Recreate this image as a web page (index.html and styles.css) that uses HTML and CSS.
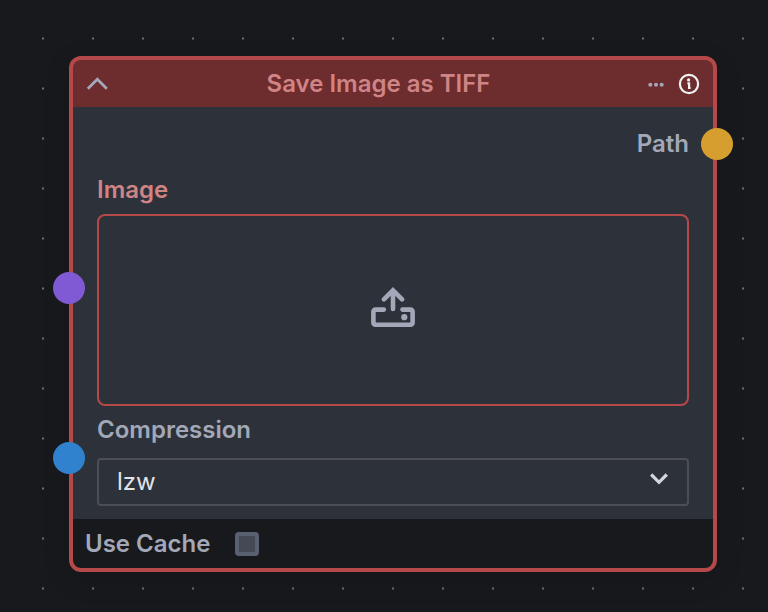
FILE: index.html
```html
<!DOCTYPE html>
<html lang="en">
<head>
<meta charset="utf-8">
<title>Save Image as TIFF</title>
<link rel="stylesheet" href="styles.css">
</head>
<body>
<main class="canvas">
  <article class="node">
    <header class="node-header">
      <svg class="collapse" viewBox="0 0 24 24" width="24" height="24"><path d="M2.8 16.7 12.3 7.2 21.8 16.7"/></svg>
      <h1 class="title">Save Image as TIFF</h1>
      <svg class="more" viewBox="0 0 16 16" width="16" height="16"><circle cx="2.3" cy="8.7" r="2"/><circle cx="8" cy="8.7" r="2"/><circle cx="13.7" cy="8.7" r="2"/></svg>
      <svg class="info" viewBox="0 0 24 24" width="24" height="24"><circle class="ring" cx="12" cy="12" r="9.1"/><circle class="point" cx="11.6" cy="7.9" r="1.6"/><path d="M10.4 11.3h1.7v4.7h1.5"/></svg>
    </header>
    <section class="node-body">
      <div class="output">Path<span class="handle handle-right"></span></div>
      <div class="label label-error">Image</div>
      <div class="dropzone">
        <svg viewBox="0 0 48 48" width="48" height="48"><path d="M24 25V6.5M14.9 15.4 24 6.3 33.1 15.4M14.9 25.6H6.4a2 2 0 0 0-2 2V38.8a2 2 0 0 0 2 2H41.6a2 2 0 0 0 2-2V27.6a2 2 0 0 0-2-2H33.5"/><circle cx="35.3" cy="33.2" r="3.1"/></svg>
        <span class="handle handle-image"></span>
      </div>
      <div class="label">Compression</div>
      <div class="select">
        <span>lzw</span>
        <svg viewBox="0 0 24 24" width="24" height="24"><path d="M4.2 4.5 12 12.3 19.8 4.5"/></svg>
        <span class="handle handle-compression"></span>
      </div>
    </section>
    <footer class="node-footer"><span>Use Cache</span><span class="checkbox"></span></footer>
  </article>
</main>
</body>
</html>
```
FILE: styles.css
```css
* {
  box-sizing: border-box;
}

body {
  margin: 0;
  background: #18191d;
  color: #a3a8b8;
  font: 500 24px/36px Inter, "Liberation Sans", sans-serif;
}

.canvas {
  width: 768px;
  height: 612px;
  padding: 56px 51px 0 69px;
  overflow: hidden;
  background: radial-gradient(circle, #85878a 0.5px, transparent 1.4px) 18px 13.5px / 50px 50px;
}

.node {
  width: 648px;
  height: 516px;
  border: 4px solid #b54848;
  border-radius: 12px;
  background: #b54848;
  box-shadow: 0 8px 28px rgba(0, 0, 0, 0.12);
}

.node-header {
  display: flex;
  align-items: center;
  height: 47px;
  padding: 0 12px;
  border-radius: 8px 8px 0 0;
  background: #6d2c2d;
}

.title {
  flex: 1;
  margin: 0;
  color: #d08485;
  font: inherit;
  font-weight: 600;
  text-align: center;
}

.collapse,
.select svg {
  fill: none;
  stroke: #a3a8b8;
  stroke-width: 2.8;
}

.more {
  fill: #a3a8b8;
  margin-right: 13px;
}

.info path,
.info .ring {
  fill: none;
  stroke: #f2f2f4;
  stroke-width: 2.2;
}

.info .point {
  fill: #f2f2f4;
}

.node-body {
  height: 412px;
  padding: 19px 24px 0;
  background: #2d3139;
}

.output {
  position: relative;
  font-weight: 600;
  text-align: right;
}

.label {
  height: 52px;
  padding-top: 6px;
  font-weight: 600;
}

.label-error {
  height: 52px;
  padding-top: 10px;
  color: #d08485;
}

.dropzone {
  position: relative;
  display: flex;
  align-items: center;
  justify-content: center;
  height: 192px;
  border: 2px solid #b54848;
  border-radius: 8px;
}

.dropzone svg {
  position: relative;
  top: -2px;
  fill: none;
  stroke: #a3a8b8;
  stroke-width: 4.6;
  stroke-linecap: round;
}

.dropzone circle {
  fill: #a3a8b8;
  stroke: none;
}

.select {
  position: relative;
  display: flex;
  align-items: center;
  justify-content: space-between;
  height: 48px;
  padding: 0 16px 0 18px;
  border: 2px solid #4b4e57;
  border-radius: 4px;
  color: #e2e3e8;
  font-weight: 400;
}

.select svg {
  stroke: #d4d6df;
  stroke-width: 3.2;
}

.node-footer {
  display: flex;
  align-items: center;
  gap: 25px;
  height: 49px;
  padding: 0 12px;
  border-radius: 0 0 8px 8px;
  background: #18191d;
  font-weight: 600;
}

.checkbox {
  width: 24px;
  height: 24px;
  border: 4px solid #596071;
  border-radius: 4px;
  background: #444955;
}

.handle {
  position: absolute;
  width: 32px;
  height: 32px;
  border-radius: 50%;
}

.handle-right {
  top: 2px;
  right: -44px;
  background: #d69e2e;
}

.handle-image {
  top: 56px;
  left: -46px;
  background: #805ad5;
}

.handle-compression {
  top: -18px;
  left: -46px;
  background: #3182ce;
}
```
